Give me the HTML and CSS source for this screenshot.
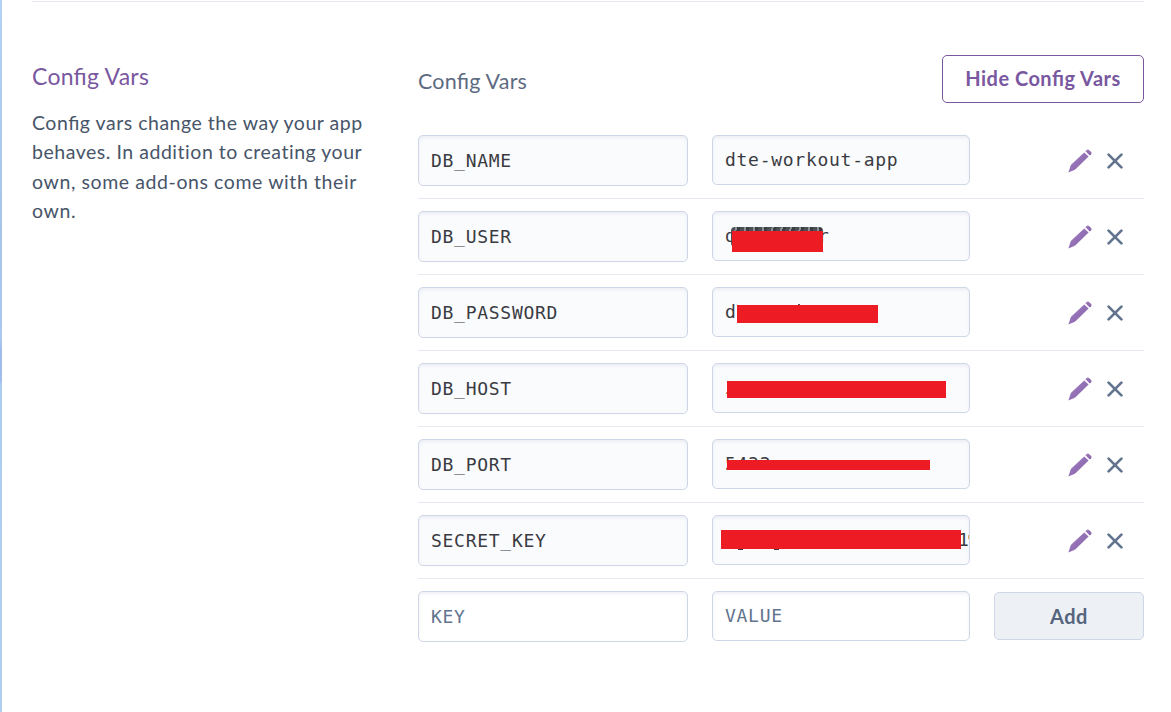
FILE: index.html
```html
<!DOCTYPE html>
<html lang="en">
<head>
<meta charset="utf-8">
<title>Config Vars</title>
<link rel="stylesheet" href="styles.css">
</head>
<body>
<svg class="defs" width="0" height="0">
  <defs>
    <linearGradient id="violet" x1="0" y1="0" x2="1" y2="1"><stop offset="0" stop-color="#a17fc2"/><stop offset="1" stop-color="#8662a8"/></linearGradient>
    <symbol id="pencil" viewBox="0 0 24 24">
      <path fill="url(#violet)" d="M0.4 23.6 2.4 17.2 Q2.8 16 3.6 15.2 L16.2 3.4 20.6 7.6 8 19.8 Q7.2 20.5 6.2 21Z"/>
      <path fill="url(#violet)" d="M17.4 2.2 18.7 1 Q19.9 0.1 21 1 L23.1 3 Q24 4.1 23.1 5.2 L21.8 6.4Z"/>
    </symbol>
    <symbol id="cross" viewBox="0 0 16 16">
      <path fill="none" stroke="#62748e" stroke-width="2.7" stroke-linecap="round" d="M1.6 1.6 14.4 14.4M14.4 1.6 1.6 14.4"/>
    </symbol>
  </defs>
</svg>
<main class="page">
  <section class="settings">
    <aside class="intro">
      <h2 class="intro-title">Config Vars</h2>
      <p class="intro-text"><span class="line l1">Config vars change the way your app</span><span class="line l2">behaves. In addition to creating your</span><span class="line l3">own, some add-ons come with their</span><span class="line l4">own.</span></p>
    </aside>
    <div class="vars">
      <header class="vars-head"><h3 class="vars-title">Config Vars</h3><button class="btn btn-hide"><span>Hide Config Vars</span></button></header>
      <div class="row"><div class="field key">DB_NAME</div><div class="field value">dte-workout-app</div><div class="actions"><svg class="pencil"><use href="#pencil"/></svg><svg class="cross"><use href="#cross"/></svg></div></div>
      <div class="row"><div class="field key">DB_USER</div><div class="field value">d<span class="tail-r">r</span><i class="scribble"></i><i class="bar bar-user"></i></div><div class="actions"><svg class="pencil"><use href="#pencil"/></svg><svg class="cross"><use href="#cross"/></svg></div></div>
      <div class="row"><div class="field key">DB_PASSWORD</div><div class="field value">d<i class="speck"></i><i class="bar bar-password"></i></div><div class="actions"><svg class="pencil"><use href="#pencil"/></svg><svg class="cross"><use href="#cross"/></svg></div></div>
      <div class="row"><div class="field key">DB_HOST</div><div class="field value"><i class="edge"></i><i class="bar bar-host"></i></div><div class="actions"><svg class="pencil"><use href="#pencil"/></svg><svg class="cross"><use href="#cross"/></svg></div></div>
      <div class="row"><div class="field key">DB_PORT</div><div class="field value"><span class="port">5432</span><i class="bar bar-port"></i></div><div class="actions"><svg class="pencil"><use href="#pencil"/></svg><svg class="cross"><use href="#cross"/></svg></div></div>
      <div class="row"><div class="field key">SECRET_KEY</div><div class="field value"><span class="tail-secret">1</span><i class="tail-dot"></i><i class="descender first"></i><i class="descender second"></i><i class="bar bar-secret"></i></div><div class="actions"><svg class="pencil"><use href="#pencil"/></svg><svg class="cross"><use href="#cross"/></svg></div></div>
      <div class="row new"><div class="field key">KEY</div><div class="field value">VALUE</div><button class="btn btn-add">Add</button></div>
    </div>
  </section>
</main>
</body>
</html>
```
FILE: styles.css
```css
* { box-sizing: border-box; }
body { margin: 0; background: #fff; font-family: Lato, "Open Sans", sans-serif; color: #475569; }
.defs { display: block; height: 0; }
.page {
  height: 712px;
  padding: 1px 27px 0 30px;
  border-left: 2px solid;
  border-image: linear-gradient(#b2d3f6 0, #a6c4e8 230px, #a9c9ee 340px, #9fbdea 350px, #a0bdeb 380px, #abcdf0 385px, #b0cff0 100%) 1;
  overflow: hidden;
}
.settings { display: grid; grid-template-columns: 386px 726px; border-top: 1px solid #e6e9f2; padding-top: 53px; }
.intro-title { margin: 6px 0 0; font-size: 23px; line-height: 30px; font-weight: 400; letter-spacing: .25px; font-feature-settings: "liga" 1; color: #79589f; }
.intro-text { margin: 17px 0 0; font-size: 19.5px; line-height: 29.3px; }
.line { display: block; width: max-content; white-space: nowrap; }
.l1 { letter-spacing: .52px; font-feature-settings: "liga" 1; }
.l2 { letter-spacing: .53px; }
.l3, .l4 { letter-spacing: .59px; }
.vars-head { display: flex; justify-content: space-between; height: 68px; }
.vars-title { margin: 11px 0 0; font-size: 21.5px; line-height: 30px; font-weight: 400; letter-spacing: .2px; font-feature-settings: "liga" 1; color: #5d6b82; }
.btn { display: flex; align-items: center; justify-content: center; height: 48px; margin: 0; padding: 0; border-radius: 5px; font-family: inherit; font-weight: 700; font-size: 20px; letter-spacing: .48px; font-feature-settings: "liga" 1; }
.btn-hide { width: 202px; border: 1px solid #79589f; background: #fff; color: #79589f; padding-bottom: 2px; }
.btn-add { width: 150px; margin-top: 1px; border: 1px solid #cfd7e6; background: #edf0f5; color: #56657d; }
.row { display: grid; grid-template-columns: 270px 258px 150px; column-gap: 24px; height: 76px; padding-top: 12px; border-bottom: 1px solid #e3e8f1; }
.row.new { border-bottom: 0; }
.field {
  position: relative;
  overflow: hidden;
  height: 51px;
  padding-left: 12px;
  border: 1px solid #cfd7e6;
  border-radius: 5px;
  background: #fafbfd;
  box-shadow: inset 0 2px 3px rgba(190, 200, 220, .25);
  font: 18px/49px "DejaVu Sans Mono", monospace;
  letter-spacing: .72px;
  color: #3a3b42;
}
.value { height: 50px; line-height: 48px; }
.new .field { background: #fff; color: #62748e; }
.actions { display: flex; align-items: center; height: 51px; padding-left: 74px; gap: 15px; }
.pencil { width: 24px; height: 24px; }
.cross { width: 16px; height: 16px; }
.bar { position: absolute; background: #ed1c24; }
.bar-user { left: 19px; top: 19px; width: 91px; height: 21px; }
.bar-password { left: 24px; top: 17px; width: 141px; height: 18px; }
.bar-host { left: 14px; top: 17px; width: 219px; height: 17px; }
.bar-port { left: 14px; top: 20px; width: 203px; height: 10px; }
.bar-secret { left: 8px; top: 14px; width: 240px; height: 19px; }
.scribble { position: absolute; left: 18px; top: 15px; width: 92px; height: 20px; border-radius: 4px; background: repeating-linear-gradient(100deg, #4b5055 0 4px, #8a8f94 4px 6px, #3a3e43 6px 9px); }
.tail-r { position: absolute; left: 105px; }
.speck { position: absolute; left: 85px; top: 16px; width: 2px; height: 2px; background: #50545c; }
.edge { position: absolute; left: 13px; top: 28px; width: 1px; height: 2px; background: #c99a4a; }
.tail-secret { position: absolute; left: 245px; }
.tail-dot { position: absolute; left: 255px; top: 19px; width: 1px; height: 4px; background: #d9a955; }
.descender { position: absolute; top: 33px; height: 1px; width: 5px; background: #3a3b42; }
.first { left: 25px; }
.second { left: 61px; }
```
